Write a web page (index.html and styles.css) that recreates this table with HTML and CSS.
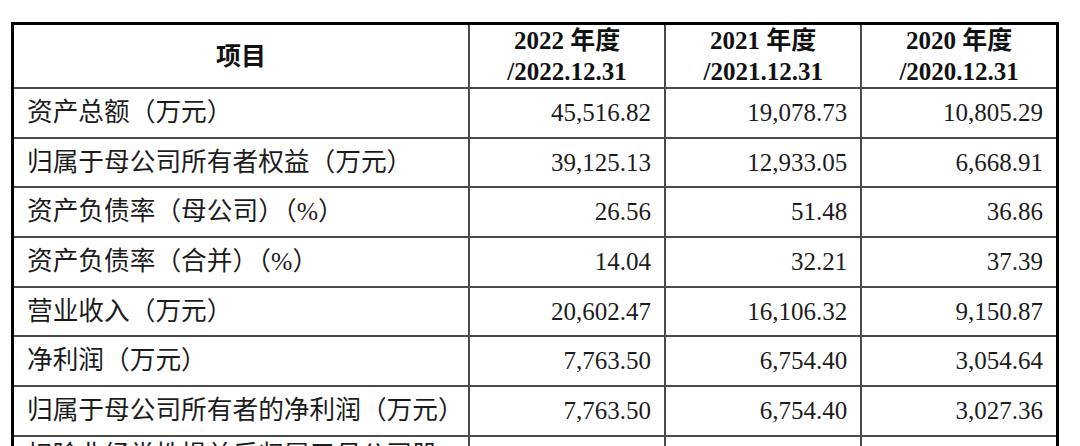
FILE: index.html
```html
<!DOCTYPE html>
<html lang="zh-CN">
<head>
<meta charset="utf-8">
<title>主要财务数据</title>
<link rel="stylesheet" href="styles.css">
</head>
<body>
<div class="page">
  <table class="fin">
    <colgroup>
      <col class="c-label">
      <col class="c-num">
      <col class="c-num">
      <col class="c-num">
    </colgroup>
    <thead>
      <tr>
        <th class="h-item">项目</th>
        <th>2022 年度<br>/2022.12.31</th>
        <th>2021 年度<br>/2021.12.31</th>
        <th>2020 年度<br>/2020.12.31</th>
      </tr>
    </thead>
    <tbody>
      <tr><td class="lbl">资产总额（万元）</td><td class="num">45,516.82</td><td class="num">19,078.73</td><td class="num">10,805.29</td></tr>
      <tr><td class="lbl">归属于母公司所有者权益（万元）</td><td class="num">39,125.13</td><td class="num">12,933.05</td><td class="num">6,668.91</td></tr>
      <tr><td class="lbl">资产负债率（母公司）（%）</td><td class="num">26.56</td><td class="num">51.48</td><td class="num">36.86</td></tr>
      <tr><td class="lbl">资产负债率（合并）（%）</td><td class="num">14.04</td><td class="num">32.21</td><td class="num">37.39</td></tr>
      <tr><td class="lbl">营业收入（万元）</td><td class="num">20,602.47</td><td class="num">16,106.32</td><td class="num">9,150.87</td></tr>
      <tr><td class="lbl">净利润（万元）</td><td class="num">7,763.50</td><td class="num">6,754.40</td><td class="num">3,054.64</td></tr>
      <tr><td class="lbl">归属于母公司所有者的净利润（万元）</td><td class="num">7,763.50</td><td class="num">6,754.40</td><td class="num">3,027.36</td></tr>
      <tr class="last"><td class="lbl lbl-wrap">扣除非经常性损益后归属于母公司股东的净利润（万元）</td><td class="num">7,346.12</td><td class="num">6,527.80</td><td class="num">2,913.45</td></tr>
    </tbody>
  </table>
</div>
</body>
</html>
```

FILE: styles.css
```css
html, body {
  margin: 0;
  padding: 0;
  background: #ffffff;
}

.page {
  padding: 22px 0 0 11px;
  height: 446px;
  overflow: hidden;
  box-sizing: border-box;
}

.fin {
  border-collapse: collapse;
  table-layout: fixed;
  width: 1048px;
  border: 3px solid #000;
  font-family: "Liberation Serif", "Noto Sans CJK SC", serif;
  font-size: 25px;
  color: #1c1c1c;
}

.c-label { width: 456px; }
.c-num { width: 196px; }

.fin th,
.fin td {
  border: 2px solid #4a4a4a;
  padding: 0 13px;
  vertical-align: middle;
}

.fin th {
  height: 61px;
  font-weight: bold;
  line-height: 31px;
  text-align: center;
  color: #111;
}

.fin td {
  height: 47.7px;
  line-height: 30px;
}

.lbl {
  text-align: left;
  font-size: 25.7px;
  padding-top: 2px;
  padding-right: 0;
}

.lbl-wrap {
  padding-right: 26px;
}

.num {
  text-align: right;
  padding-top: 2px;
}

.last td {
  padding-top: 4px;
  padding-bottom: 4px;
}
```
